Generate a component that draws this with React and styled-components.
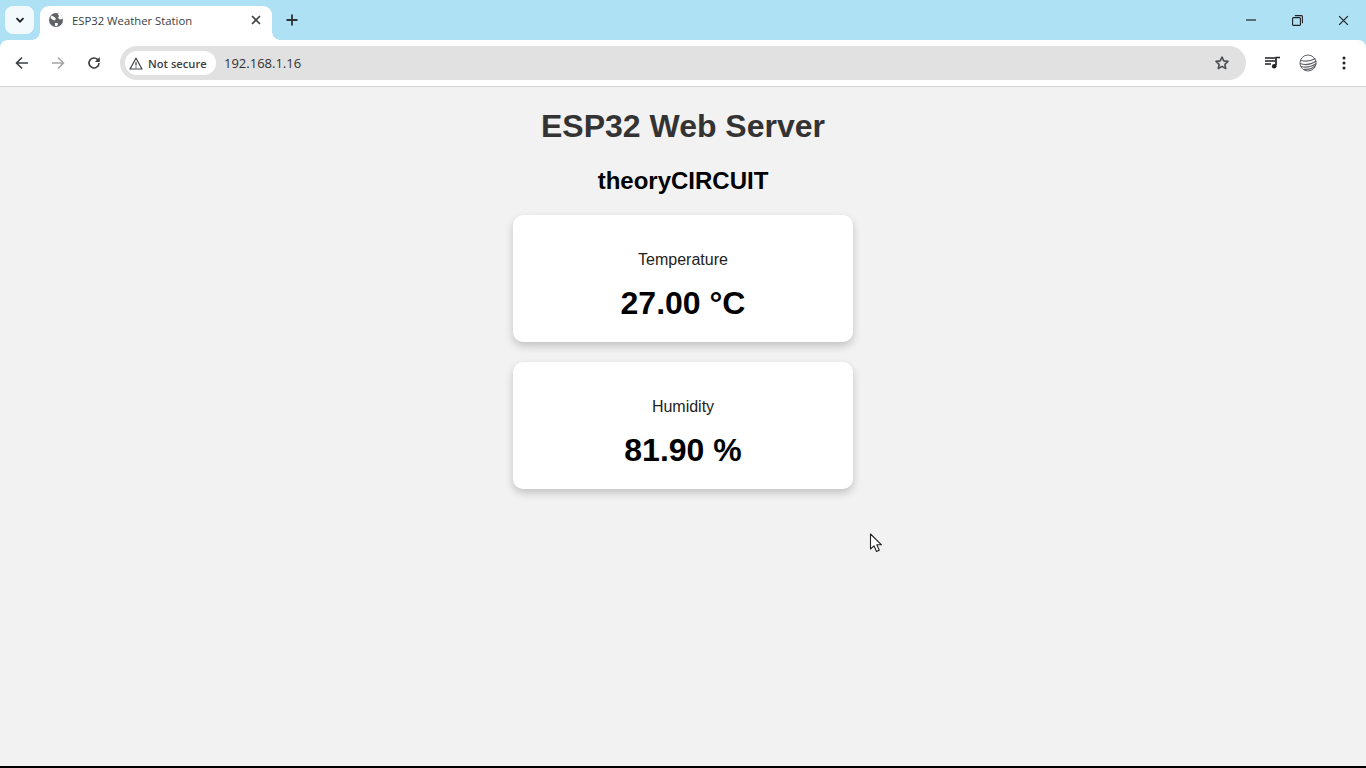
import React from "react";
import styled, { createGlobalStyle } from "styled-components";

const Global = createGlobalStyle`
  html, body { margin: 0; padding: 0; height: 100%; overflow: hidden; }
  #root { height: 100%; }
  * { box-sizing: border-box; }
`;

const Screen = styled.div`
  position: relative;
  display: flex;
  flex-direction: column;
  width: 1366px;
  height: 768px;
  background: #afe1f4;
  font-family: "Open Sans", "Noto Sans", sans-serif;
`;

const TabStrip = styled.div`
  display: flex;
  align-items: flex-end;
  height: 40px;
  flex: none;
  padding-left: 5px;
`;

const TabSearch = styled.div`
  display: flex;
  align-items: center;
  justify-content: center;
  width: 29px;
  height: 28px;
  margin-bottom: 6px;
  background: #f3fafd;
  border-radius: 8px;
  color: #202124;
`;

const Tab = styled.div`
  position: relative;
  display: flex;
  align-items: center;
  width: 232px;
  height: 34px;
  margin-left: 6px;
  padding: 0 11px 6px 8px;
  background: #fff;
  border-radius: 9px 9px 0 0;
  color: #3c4043;
  font-size: 11.3px;

  &::before, &::after {
    content: "";
    position: absolute;
    bottom: 0;
    width: 8px;
    height: 8px;
  }
  &::before { left: -8px; background: radial-gradient(circle at 0 0, transparent 7.5px, #fff 8px); }
  &::after { right: -8px; background: radial-gradient(circle at 100% 0, transparent 7.5px, #fff 8px); }
`;

const TabTitle = styled.span`
  flex: 1;
  margin-left: 8px;
  white-space: nowrap;
`;

const NewTab = styled.div`
  display: flex;
  align-items: center;
  justify-content: center;
  width: 20px;
  height: 20px;
  margin: 0 0 10px 10px;
  color: #303134;
`;

const WindowControls = styled.div`
  display: flex;
  margin-left: auto;
  height: 40px;
  align-items: center;
  color: #202124;
`;

const WindowButton = styled.div`
  display: flex;
  align-items: center;
  justify-content: center;
  width: 46px;
  height: 40px;
`;

const Toolbar = styled.div`
  display: flex;
  align-items: center;
  flex: none;
  height: 46px;
  background: #fff;
  border-radius: 8px 8px 0 0;
  padding: 0 4px;
`;

const NavButton = styled.div`
  display: flex;
  align-items: center;
  justify-content: center;
  width: 36px;
  height: 36px;
  color: ${(p) => p.$color || "#3c4043"};
`;

const Omnibox = styled.div`
  display: flex;
  align-items: center;
  width: 1126px;
  height: 34px;
  margin: 0 8px;
  padding: 0 6px 0 5px;
  background: #e1e1e1;
  border-radius: 17px;
`;

const SecurityChip = styled.div`
  display: flex;
  align-items: center;
  gap: 5px;
  height: 24px;
  width: 91px;
  padding-left: 4px;
  background: #fff;
  border-radius: 12px;
  font-size: 11.2px;
  font-weight: 600;
  color: #3c4043;
  white-space: nowrap;
`;

const Url = styled.span`
  flex: 1;
  margin-left: 8px;
  font-size: 13px;
  color: #303134;
`;

const Divider = styled.div`
  flex: none;
  height: 1px;
  background: #d3d3d3;
`;

const Page = styled.main`
  flex: 1;
  display: flex;
  flex-direction: column;
  align-items: center;
  background: #f2f2f2;
  font-family: "Liberation Sans", Arial, sans-serif;
`;

const BottomEdge = styled.div`
  flex: none;
  height: 2px;
  background: #000;
`;

const Title = styled.h1`
  margin: 21.44px 0;
  font-size: 32px;
  font-weight: 700;
  line-height: 37px;
  color: #333;
`;

const Subtitle = styled.h2`
  margin: 0 0 20px;
  font-size: 24px;
  font-weight: 700;
  line-height: 28px;
  color: #000;
`;

const Card = styled.section`
  width: 340px;
  height: 127px;
  margin-bottom: 20px;
  padding: 36px 20px 20px;
  background: #fff;
  border-radius: 10px;
  box-shadow: 0 4px 8px rgba(0, 0, 0, 0.2);
  text-align: center;
`;

const Label = styled.p`
  margin: 0 0 16px;
  font-size: 16px;
  line-height: 18px;
  color: #222;
`;

const Value = styled.div`
  font-size: 32px;
  font-weight: 700;
  line-height: 37px;
  color: #000;
`;

const Cursor = styled.svg`
  position: absolute;
  left: 869px;
  top: 533px;
`;

const Chevron = () => (
  <svg width="12" height="12" viewBox="0 0 12 12" fill="none" stroke="currentColor" strokeWidth="1.8">
    <path d="M2.5 4.2 6 7.7l3.5-3.5" />
  </svg>
);
const Globe = () => (
  <svg width="16" height="16" viewBox="0 0 16 16">
    <circle cx="8" cy="8" r="7" fill="#5f6368" />
    <path d="M3 3.5 6.5 5 8 7 6.5 8.5 5 8 2.5 6ZM7 11l2.5 0 .5 1.5L8 14.8 7 13ZM9.5 1.5 11 4l-1 2 2 1.5 2.8-.5-.3-2.5L12 2Z" fill="#fff" />
  </svg>
);
const Close = ({ size = 10, w = 1.6 }) => (
  <svg width={size} height={size} viewBox="0 0 10 10" fill="none" stroke="currentColor" strokeWidth={w}>
    <path d="M1 1l8 8M9 1l-8 8" />
  </svg>
);
const Plus = () => (
  <svg width="12" height="12" viewBox="0 0 12 12" fill="none" stroke="currentColor" strokeWidth="1.8">
    <path d="M6 .5v11M.5 6h11" />
  </svg>
);
const Arrow = ({ flip }) => (
  <svg width="14" height="14" viewBox="0 0 14 14" fill="none" stroke="currentColor" strokeWidth="1.6" style={flip ? { transform: "scaleX(-1)" } : undefined}>
    <path d="M13 7H1.5M7 1.5 1.5 7 7 12.5" />
  </svg>
);
const Reload = () => (
  <svg width="14" height="14" viewBox="0 0 14 14" fill="none">
    <path d="M12 7a5 5 0 1 1-1.5-3.6L12 5" stroke="currentColor" strokeWidth="1.6" />
    <path d="M12.8 1v5h-5z" fill="currentColor" />
  </svg>
);
const Warning = () => (
  <svg width="14" height="13" viewBox="0 0 14 13" fill="none" stroke="#3c4043" strokeWidth="1.2">
    <path d="M7 1.2 13 12H1Z" strokeLinejoin="round" />
    <path d="M7 5v3.6M7 9.6v1.1" />
  </svg>
);
const Star = () => (
  <svg width="16" height="16" viewBox="0 0 16 16" fill="none" stroke="#4a4d51" strokeWidth="1.6">
    <path d="M8 2l1.8 3.9 4.2.5-3.1 2.9.8 4.2L8 11.4l-3.7 2.1.8-4.2L2 6.4l4.2-.5Z" strokeLinejoin="round" />
  </svg>
);
const Media = () => (
  <svg width="16" height="14" viewBox="0 0 16 14" fill="none" stroke="#202124" strokeWidth="1.4" style={{ marginLeft: 2 }}>
    <path d="M0 2h10M0 5h10M0 8h6" />
    <path d="M11 9.5V1.5h4" strokeWidth="1.7" />
    <circle cx="9.2" cy="10.3" r="2.3" fill="#202124" stroke="none" />
  </svg>
);
const Profile = () => (
  <svg width="18" height="18" viewBox="0 0 18 18" fill="none" stroke="#5f6368">
    <circle cx="9" cy="9" r="8" strokeWidth="1" />
    <path d="M2 6.5C7 8 12 7 16.5 4.5M1 9.5c5 2 11 1 16.5-2.5M2 12.5c5 1.5 10 .5 15.5-3M5 15.3c4 .5 8-.5 11-3.3" strokeWidth="1.2" />
  </svg>
);
const Dots = () => (
  <svg width="4" height="14" viewBox="0 0 4 14" fill="#202124">
    <circle cx="2" cy="2" r="1.5" />
    <circle cx="2" cy="7" r="1.5" />
    <circle cx="2" cy="12" r="1.5" />
  </svg>
);
const Minimize = () => (
  <svg width="10" height="2" viewBox="0 0 10 2" stroke="currentColor" strokeWidth="1.2"><path d="M0 1h10" /></svg>
);
const Restore = () => (
  <svg width="11" height="11" viewBox="0 0 11 11" fill="none" stroke="currentColor" strokeWidth="1.1">
    <rect x=".6" y="2.6" width="7.8" height="7.8" rx="1" />
    <path d="M2.8 .6h6.600a1 1 0 0 1 1 1v6.600" />
  </svg>
);

export default function App() {
  return (
    <Screen>
      <Global />
      <TabStrip>
        <TabSearch><Chevron /></TabSearch>
        <Tab>
          <Globe />
          <TabTitle>ESP32 Weather Station</TabTitle>
          <Close />
        </Tab>
        <NewTab><Plus /></NewTab>
        <WindowControls>
          <WindowButton><Minimize /></WindowButton>
          <WindowButton><Restore /></WindowButton>
          <WindowButton><Close size={11} w={1.1} /></WindowButton>
        </WindowControls>
      </TabStrip>
      <Toolbar>
        <NavButton><Arrow /></NavButton>
        <NavButton $color="#a3a5a8"><Arrow flip /></NavButton>
        <NavButton><Reload /></NavButton>
        <Omnibox>
          <SecurityChip><Warning />Not secure</SecurityChip>
          <Url>192.168.1.16</Url>
          <NavButton><Star /></NavButton>
        </Omnibox>
        <NavButton><Media /></NavButton>
        <NavButton><Profile /></NavButton>
        <NavButton><Dots /></NavButton>
      </Toolbar>
      <Divider />
      <Page>
        <Title>ESP32 Web Server</Title>
        <Subtitle>theoryCIRCUIT</Subtitle>
        <Card>
          <Label>Temperature</Label>
          <Value>27.00 °C</Value>
        </Card>
        <Card>
          <Label>Humidity</Label>
          <Value>81.90 %</Value>
        </Card>
      </Page>
      <BottomEdge />
      <Cursor width="14" height="20" viewBox="0 0 14 20">
        <path d="M1.5 1v15l3.500-3.200 2.500 5.700 2.800-1.200-2.500-5.500h4.700Z" fill="#fff" stroke="#222" strokeWidth="1.1" strokeLinejoin="round" />
      </Cursor>
    </Screen>
  );
}
